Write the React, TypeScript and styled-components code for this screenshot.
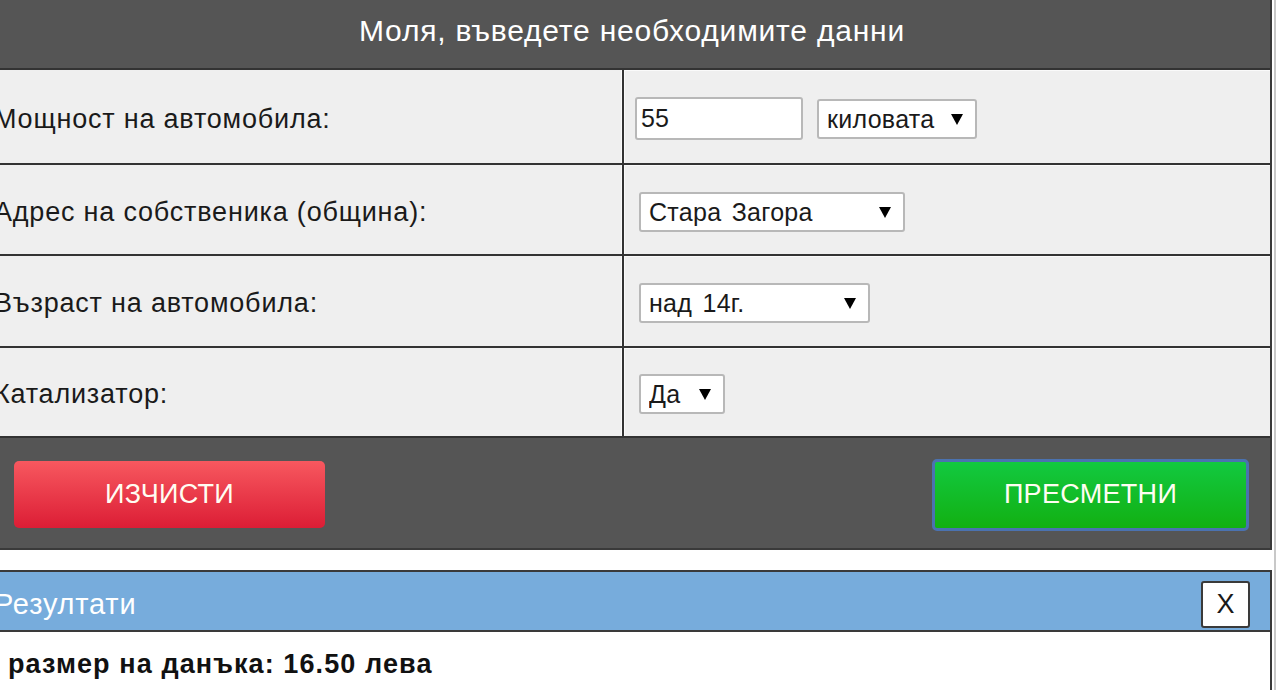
import React from "react";
import styled, { createGlobalStyle } from "styled-components";

const GlobalStyle = createGlobalStyle`
  html, body {
    margin: 0;
    padding: 0;
    background: #ffffff;
    overflow: hidden;
  }
  body {
    font-family: "Liberation Sans", Arial, sans-serif;
    color: #111;
  }
`;

const Page = styled.div`
  margin-left: -8px;
  width: 1284px;
  min-height: 690px;
  padding-right: 2px;
  border-right: 2px solid #c8c8c8;
  box-sizing: border-box;
`;

const Form = styled.div`
  border-left: 2px solid #3a3a3a;
  border-right: 2px solid #3a3a3a;
  border-bottom: 2px solid #3a3a3a;
`;

const FormHeader = styled.div`
  height: 70px;
  box-sizing: border-box;
  padding-bottom: 6px;
  background: #555555;
  border-bottom: 2px solid #333333;
  color: #ffffff;
  font-size: 30px;
  letter-spacing: 0.8px;
  display: flex;
  align-items: center;
  justify-content: center;
`;

const Row = styled.div<{ $h: number }>`
  display: grid;
  grid-template-columns: 630px 1fr;
  height: ${(p) => p.$h}px;
  background: #efefef;
  border-bottom: 2px solid #333333;
`;

const LabelCell = styled.div`
  display: flex;
  align-items: center;
  padding-top: 5px;
  border-right: 2px solid #333333;
  box-shadow: inset -1px 0 0 #fafafa;
  font-size: 27px;
  letter-spacing: 0.8px;
  color: #1a1a1a;
`;

const FieldCell = styled.div`
  display: flex;
  align-items: center;
  gap: 14px;
  padding: 4px 0 0 11px;
  box-shadow: inset 1px 1px 0 #fafafa;
`;

const TextInput = styled.input`
  width: 168px;
  height: 43px;
  box-sizing: border-box;
  border: 2px solid #b8b8b8;
  border-radius: 3px;
  background: #ffffff;
  font-family: "Liberation Sans", Arial, sans-serif;
  font-size: 25px;
  color: #1a1a1a;
  padding: 0 4px;
  outline: none;
`;

const SelectWrap = styled.div<{ $w: number; $shift?: number }>`
  position: relative;
  width: ${(p) => p.$w}px;
  height: 40px;
  margin-left: ${(p) => p.$shift ?? 0}px;
`;

const Select = styled.select`
  appearance: none;
  -webkit-appearance: none;
  width: 100%;
  height: 100%;
  box-sizing: border-box;
  border: 2px solid #b8b8b8;
  border-radius: 3px;
  background: #ffffff;
  font-family: "Liberation Sans", Arial, sans-serif;
  font-size: 25px;
  letter-spacing: 0.3px;
  word-spacing: 3px;
  color: #1a1a1a;
  padding: 0 8px;
  outline: none;
`;

const Arrow = styled.span`
  position: absolute;
  right: 14px;
  top: 15px;
  width: 0;
  height: 0;
  border-left: 6px solid transparent;
  border-right: 6px solid transparent;
  border-top: 11px solid #000000;
  pointer-events: none;
`;

const Footer = styled.div`
  height: 110px;
  box-sizing: border-box;
  padding: 3px 21px 0 20px;
  background: #555555;
  display: flex;
  align-items: center;
  justify-content: space-between;
`;

const ActionButton = styled.button<{ $kind: "clear" | "calc" }>`
  font-family: "Liberation Sans", Arial, sans-serif;
  font-size: 27px;
  letter-spacing: 0.3px;
  color: #fffdf2;
  cursor: pointer;
  border-radius: 5px;
  ${(p) =>
    p.$kind === "clear"
      ? `
    width: 311px;
    height: 67px;
    border: none;
    background: linear-gradient(#f7585f, #dc1d35);
  `
      : `
    width: 317px;
    height: 72px;
    border: 3px solid #4b72b0;
    background: linear-gradient(#12c940, #12b012);
  `}
`;

const Results = styled.div`
  margin-top: 20px;
  border: 2px solid #3a3a3a;
  border-bottom: none;
`;

const ResultsHeader = styled.div`
  height: 60px;
  box-sizing: border-box;
  padding: 6px 20px 0 0;
  background: #77acdc;
  border-bottom: 2px solid #3a3a3a;
  display: flex;
  align-items: center;
  justify-content: space-between;
  color: #ffffff;
  font-size: 29px;
  letter-spacing: 0.8px;
`;

const CloseButton = styled.button`
  width: 49px;
  height: 47px;
  background: #ffffff;
  border: 2px solid #3a3a3a;
  border-radius: 3px;
  font-family: "Liberation Sans", Arial, sans-serif;
  font-size: 27px;
  color: #1a1a1a;
  padding: 0;
  cursor: pointer;
`;

const ResultsBody = styled.div`
  padding: 17px 0 0 14px;
  font-size: 27px;
  font-weight: bold;
  letter-spacing: 1.1px;
  color: #111;
  height: 60px;
`;

type Field = {
  label: string;
  height: number;
  input?: string;
  selects: { value: string; width: number; shift?: number }[];
};

const fields: Field[] = [
  {
    label: "Мощност на автомобила:",
    height: 93,
    input: "55",
    selects: [{ value: "киловата", width: 160 }],
  },
  {
    label: "Адрес на собственика (община):",
    height: 89,
    selects: [{ value: "Стара Загора", width: 266, shift: 4 }],
  },
  {
    label: "Възраст на автомобила:",
    height: 90,
    selects: [{ value: "над 14г.", width: 231, shift: 4 }],
  },
  {
    label: "Катализатор:",
    height: 88,
    selects: [{ value: "Да", width: 86, shift: 4 }],
  },
];

const App = () => {
  return (
    <>
      <GlobalStyle />
      <Page>
        <Form>
          <FormHeader>Моля, въведете необходимите данни</FormHeader>
          {fields.map((f) => (
            <Row key={f.label} $h={f.height}>
              <LabelCell>{f.label}</LabelCell>
              <FieldCell>
                {f.input && <TextInput defaultValue={f.input} />}
                {f.selects.map((s) => (
                  <SelectWrap key={s.value} $w={s.width} $shift={s.shift}>
                    <Select defaultValue={s.value}>
                      <option>{s.value}</option>
                    </Select>
                    <Arrow />
                  </SelectWrap>
                ))}
              </FieldCell>
            </Row>
          ))}
          <Footer>
            <ActionButton $kind="clear">ИЗЧИСТИ</ActionButton>
            <ActionButton $kind="calc">ПРЕСМЕТНИ</ActionButton>
          </Footer>
        </Form>
        <Results>
          <ResultsHeader>
            <span>Резултати</span>
            <CloseButton>X</CloseButton>
          </ResultsHeader>
          <ResultsBody>размер на данъка: 16.50 лева</ResultsBody>
        </Results>
      </Page>
    </>
  );
};

export default App;
